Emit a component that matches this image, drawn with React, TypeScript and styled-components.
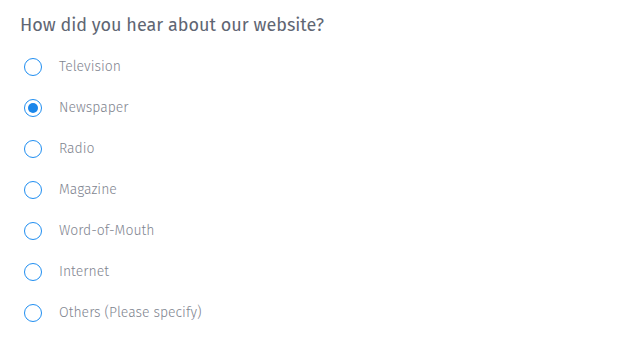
import React, { useState } from "react";
import styled, { createGlobalStyle } from "styled-components";

const Global = createGlobalStyle`
  html, body { margin: 0; padding: 0; background: #fff; }
  body { font-family: "Fira Sans", "Open Sans", sans-serif; }
`;

const Form = styled.section`
  padding: 14px 0 0 20px;
  display: flex;
  flex-direction: column;
  gap: 10px;
`;

const Title = styled.h2`
  margin: 0;
  font-size: 18px;
  font-weight: 400;
  line-height: 22px;
  color: #5f6673;
`;

const List = styled.div`
  display: flex;
  flex-direction: column;
`;

const Row = styled.label`
  display: flex;
  align-items: center;
  height: 41px;
  gap: 17px;
  padding-left: 4px;
  cursor: pointer;
`;

const Radio = styled.input.attrs({ type: "radio" })`
  appearance: none;
  margin: 0;
  width: 18px;
  height: 18px;
  border: 1.5px solid #1f8ef1;
  border-radius: 50%;
  box-sizing: border-box;
  display: grid;
  place-items: center;
  flex: none;
  &::after {
    content: "";
    width: 10px;
    height: 10px;
    border-radius: 50%;
    background: #1a86ea;
    transform: scale(0);
  }
  &:checked::after { transform: scale(1); }
`;

const Text = styled.span`
  font-size: 14px;
  font-weight: 300;
  color: #7f8590;
`;

const options = [
  "Television",
  "Newspaper",
  "Radio",
  "Magazine",
  "Word-of-Mouth",
  "Internet",
  "Others (Please specify)",
];

export default function App() {
  const [val, setVal] = useState("Newspaper");
  return (
    <>
      <Global />
      <Form>
        <Title>How did you hear about our website?</Title>
        <List>
          {options.map((o) => (
            <Row key={o}>
              <Radio name="source" checked={val === o} onChange={() => setVal(o)} />
              <Text>{o}</Text>
            </Row>
          ))}
        </List>
      </Form>
    </>
  );
}
